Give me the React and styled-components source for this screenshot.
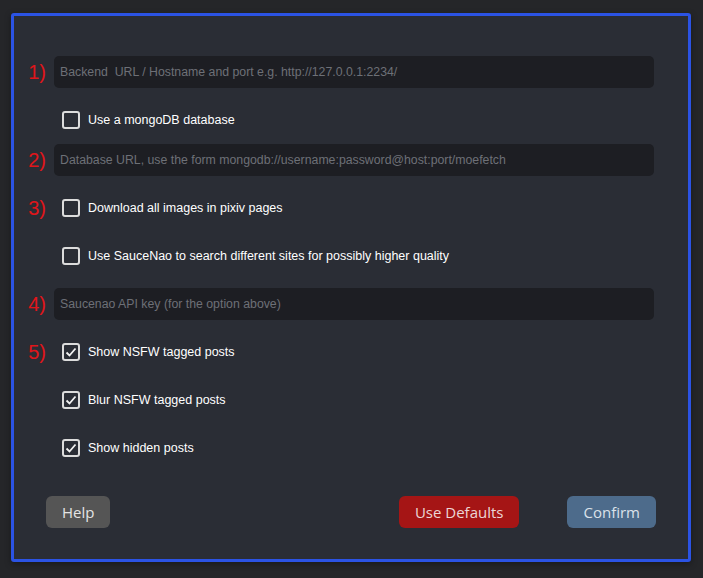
import styled, { createGlobalStyle } from "styled-components";

const GlobalStyle = createGlobalStyle`
  html, body {
    margin: 0;
    padding: 0;
    background: #252629;
  }
  body {
    font-family: "Liberation Sans", Arial, sans-serif;
  }
`;

const Page = styled.div`
  width: 703px;
  height: 578px;
  padding: 13px 0 0 11px;
  box-sizing: border-box;
`;

const Panel = styled.div`
  width: 680px;
  height: 549px;
  box-sizing: border-box;
  border: 3px solid #2b53e4;
  border-radius: 3px;
  background: #2a2d35;
  box-shadow: 0 2px 6px rgba(0, 0, 0, 0.35);
  padding: 40px 34px 0 8px;
  display: flex;
  flex-direction: column;
`;

const Row = styled.div`
  display: grid;
  grid-template-columns: 24px 600px;
  column-gap: 8px;
  align-items: center;
  height: 32px;
  margin-bottom: ${(p) => p.$after ?? 16}px;
`;

const Num = styled.span`
  font-family: "Liberation Sans", Arial, sans-serif;
  font-size: 20px;
  color: #e0151a;
  text-align: right;
  line-height: 1;
`;

const Field = styled.input`
  height: 32px;
  width: 100%;
  box-sizing: border-box;
  border: none;
  outline: none;
  border-radius: 5px;
  background: #1d1e23;
  padding: 0 6px;
  font-family: "Liberation Sans", Arial, sans-serif;
  font-size: 12.3px;
  color: #ddd;

  &::placeholder {
    color: #6d7077;
  }
`;

const Check = styled.label`
  display: flex;
  align-items: center;
  gap: 8px;
  margin-left: 8px;
  font-size: 12.5px;
  color: #fff;
`;

const Box = styled.span`
  width: 18px;
  height: 18px;
  box-sizing: border-box;
  border: 2px solid #dcdcdc;
  border-radius: 3px;
  display: flex;
  align-items: center;
  justify-content: center;
`;

const Buttons = styled.div`
  display: flex;
  justify-content: space-between;
  align-items: center;
  margin: 32px -2px 0 24px;
`;

const Right = styled.div`
  display: flex;
  gap: 48px;
`;

const Button = styled.button`
  height: 32px;
  padding: 0 ${(p) => p.$pad}px;
  border: none;
  border-radius: 6px;
  background: ${(p) => p.$bg};
  color: ${(p) => p.$fg};
  font-family: "Open Sans", sans-serif;
  font-size: 15px;
`;

const Tick = () => (
  <svg width="14" height="14" viewBox="0 0 14 14">
    <polyline
      points="2.5,7.5 5.5,10.5 11.5,3.5"
      fill="none"
      stroke="#f2f2f2"
      strokeWidth="1.8"
    />
  </svg>
);

const CheckRow = ({ num, label, checked, after }) => (
  <Row $after={after}>
    <Num>{num}</Num>
    <Check>
      <Box>{checked && <Tick />}</Box>
      {label}
    </Check>
  </Row>
);

const InputRow = ({ num, placeholder, after }) => (
  <Row $after={after}>
    <Num>{num}</Num>
    <Field placeholder={placeholder} />
  </Row>
);

export default function App() {
  return (
    <>
      <GlobalStyle />
      <Page>
        <Panel>
          <InputRow
            num="1)"
            placeholder={"Backend\u00a0 URL / Hostname and port e.g. http://127.0.0.1:2234/"}
          />
          <CheckRow label="Use a mongoDB database" after={8} />
          <InputRow
            num="2)"
            placeholder="Database URL, use the form mongodb://username:password@host:port/moefetch"
          />
          <CheckRow num="3)" label="Download all images in pixiv pages" />
          <CheckRow label="Use SauceNao to search different sites for possibly higher quality" />
          <InputRow num="4)" placeholder="Saucenao API key (for the option above)" />
          <CheckRow num="5)" label="Show NSFW tagged posts" checked />
          <CheckRow label="Blur NSFW tagged posts" checked />
          <CheckRow label="Show hidden posts" checked after={0} />
          <Buttons>
            <Button $bg="#555555" $fg="#e4e4e4" $pad={16}>Help</Button>
            <Right>
              <Button $bg="#a51515" $fg="#ecd6d6" $pad={16}>Use Defaults</Button>
              <Button $bg="#4d6b8b" $fg="#dbe2ea" $pad={16}>Confirm</Button>
            </Right>
          </Buttons>
        </Panel>
      </Page>
    </>
  );
}
